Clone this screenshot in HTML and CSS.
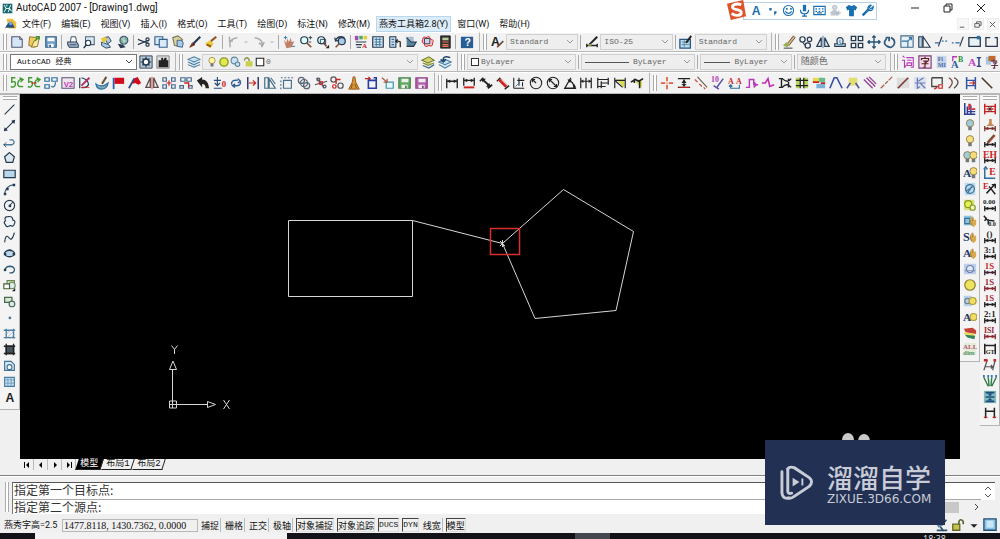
FILE: index.html
```html
<!DOCTYPE html>
<html lang="zh-CN">
<head>
<meta charset="utf-8">
<title>AutoCAD 2007 - [Drawing1.dwg]</title>
<link rel="stylesheet" href="styles.css">
</head>
<body>
<header class="titlebar">
  <svg class="app-logo" viewBox="0 0 16 16"><path fill="#15666d" d="M1 1h14v14H1z"/><path d="M3 3l3 5-3 5M6 8h4l3-5M9 13l2-5 3 4M7 2v3" stroke="#d7f0ee" stroke-width="1.5" fill="none"/></svg>
  <h1>AutoCAD 2007 - [Drawing1.dwg]</h1>
  <div class="window-buttons">
    <button aria-label="最小化"><svg viewBox="0 0 10 10"><path d="M1 5h8"/></svg></button>
    <button aria-label="还原"><svg viewBox="0 0 10 10"><path d="M1 3h6v6H1zM3 3V1h6v6H7"/></svg></button>
    <button aria-label="关闭"><svg viewBox="0 0 10 10"><path d="M1 1l8 8M9 1L1 9"/></svg></button>
  </div>
</header>
<nav class="menubar">
  <svg class="doc-logo" viewBox="0 0 16 16"><path fill="#f2bd34" d="M2 1h8l5 5v8H5z"/><path fill="#234f87" d="M0 13l4-6 5-2 4 8z"/><path fill="#79aeda" d="M5 3l6 5-5 2z"/></svg>
  <button>文件(F)</button><button>编辑(E)</button><button>视图(V)</button><button>插入(I)</button><button>格式(O)</button><button>工具(T)</button><button>绘图(D)</button><button>标注(N)</button><button>修改(M)</button><button class="hot">燕秀工具箱2.8(Y)</button><button>窗口(W)</button><button>帮助(H)</button>
  <div class="mdi-buttons">
    <button aria-label="最小化图形"><svg viewBox="0 0 10 10"><path d="M2 8h5"/></svg></button>
    <button aria-label="还原图形"><svg viewBox="0 0 10 10"><path d="M2 4h5v4H2zM4 4V2h5v4H7"/></svg></button>
    <button aria-label="关闭图形"><svg viewBox="0 0 10 10"><path d="M2 2l6 6M8 2L2 8"/></svg></button>
  </div>
</nav>

<div class="band band-standard">
  <div class="toolbar"><i class="grip"></i><div class="icons" data-icons="new open save | print preview publish web | cut copy paste brush match | undo dash redo dash | pan zoom zoomwin zoomprev | props center palette sheet markup calc | help"></div></div>
  <div class="toolbar">
    <i class="grip"></i>
    <div class="icons single" data-icons="textstyle"></div>
    <label class="combo"><select aria-label="文字样式"><option>Standard</option></select></label>
    <i class="sep"></i>
    <div class="icons single" data-icons="dimstyle"></div>
    <label class="combo"><select aria-label="标注样式"><option>ISO-25</option></select></label>
    <i class="sep"></i>
    <div class="icons single" data-icons="tablestyle"></div>
    <label class="combo"><select aria-label="表格样式"><option>Standard</option></select></label>
  </div>
  <div class="toolbar flush"><i class="grip"></i><div class="icons" data-icons="erase copyobj mirror offset array move rotate scale stretch trim extend breakpt break"></div></div>
</div>

<div class="band band-layers">
  <div class="toolbar">
    <i class="grip"></i>
    <label class="combo active"><select aria-label="工作空间"><option>AutoCAD 经典</option></select></label>
    <div class="icons pair" data-icons="gear workspace"></div>
  </div>
  <div class="toolbar">
    <i class="grip"></i>
    <div class="icons single" data-icons="layers"></div>
    <label class="combo layer-combo"><span class="layer-state" data-icons="bulb sun freeze lock swatch"></span><select aria-label="图层"><option>0</option></select></label>
    <div class="icons pair" data-icons="layercur layerprev"></div>
  </div>
  <div class="toolbar properties">
    <i class="grip"></i>
    <label class="combo"><span class="swatch"></span><select aria-label="颜色"><option>ByLayer</option></select></label>
    <i class="sep"></i>
    <label class="combo"><span class="stroke"></span><select aria-label="线型"><option>ByLayer</option></select></label>
    <i class="sep"></i>
    <label class="combo"><span class="stroke short"></span><select aria-label="线宽"><option>ByLayer</option></select></label>
    <i class="sep"></i>
    <label class="combo"><select aria-label="打印样式"><option>随颜色</option></select></label>
  </div>
  <div class="toolbar flush"><i class="grip"></i><div class="icons" data-icons="ci zi fimi ab ai colorzi"></div></div>
</div>

<div class="band band-tools">
  <div class="toolbar"><i class="grip"></i><div class="icons" data-icons="swap swapx blocks v2 pencil dish flag flagpen triangles squares squares2 turn level spin wall copyangle copydash chain cluster linkred broom insert pastebox disk diskpink"></div></div>
  <div class="toolbar"><i class="grip"></i><div class="icons" data-icons="dlin dred dalign dpencil dord radius diameter dangle dbase dcont dyellow dbird"></div></div>
  <div class="toolbar flush"><i class="grip"></i><div class="icons" data-icons="crossred inter dashred ten aa step zigzag beam hatchy colors vblue vyellow diag dashd diagred chang corner arcs hblue slant"></div></div>
</div>

<main class="workspace">
  <aside class="side"><i class="grip"></i><div class="icons vertical draw" data-icons="line xline pline polygon rect arc circle cloud spline ellipse earc insblock mkblock point hatch gradient region table mtext"></div></aside>
  <section class="drawing">
    <svg class="canvas" viewBox="20 94 940 365" preserveAspectRatio="xMinYMin slice" role="img" aria-label="模型空间">
      <g fill="none" stroke="#d6d6d6" stroke-width="1">
        <path d="M288.500 220.500H412.500V296.500H288.500Z"/>
        <path d="M412.500 220.500L502.500 243.500L563.500 189.500L633.500 231.500L616 310.500L535 318.500L502.500 243.500"/>
        <path d="M500 241l5 5M505 241l-5 5M502.500 240v7"/>
        <path d="M172.500 408V369M169 404.500H207M169.500 401h7v7h-7zM169.500 369.500h7l-3.500-8.500zM207.500 401.500v6l8-3z"/>
        <path d="M171.500 345.500l3 4 3-4M174.500 349v5M223.500 400l6 9M229.500 400l-6 9"/>
      </g>
      <path d="M490.500 228.500h29v26h-29z" fill="none" stroke="#d4312e" stroke-width="1.5"/>
      <g fill="#c9c9cc"><ellipse cx="848" cy="440" rx="6" ry="7"/><ellipse cx="864" cy="441" rx="6" ry="7"/></g>
    </svg>
    <div class="tabs">
      <button class="nav" aria-label="第一个"><svg viewBox="0 0 8 8"><path d="M1 1h1v6H1zM6 1v6L3 4z"/></svg></button>
      <button class="nav" aria-label="上一个"><svg viewBox="0 0 8 8"><path d="M5 1v6L2 4z"/></svg></button>
      <button class="nav" aria-label="下一个"><svg viewBox="0 0 8 8"><path d="M3 1v6l3-3z"/></svg></button>
      <button class="nav" aria-label="最后一个"><svg viewBox="0 0 8 8"><path d="M6 1h1v6H6zM2 1v6l3-3z"/></svg></button>
      <button class="tab current"><span>模型</span></button><button class="tab"><span>布局1</span></button><button class="tab"><span>布局2</span></button>
    </div>
  </section>
  <aside class="side"><i class="grip"></i><div class="icons vertical" data-icons="layred lamp bulbon bulbs abulb ring greenlay bluehand shand ahand freezelay disc discs adisc stack alldim"></div></aside>
  <aside class="side"><i class="grip"></i><div class="icons vertical" data-icons="r1 r2 r3 eh le ex zero cart paren r31 is1 is2 is3 r21 isr gt rarr comb bluedim hdim"></div></aside>
</main>

<section class="command">
  <i class="grip"></i>
  <div class="command-body">
    <p class="history">指定第一个目标点:</p>
    <div class="prompt-row">
      <input class="prompt" aria-label="命令行" value="指定第二个源点:">
      <div class="hscroll"><span class="thumb"></span><button aria-label="向右滚动"><svg viewBox="0 0 8 8"><path d="M2 1l3 3-3 3"/></svg></button></div>
    </div>
    <div class="vscroll"><svg viewBox="0 0 8 14"><path d="M1 5l3-3 3 3M1 9l3 3 3-3"/></svg></div>
  </div>
</section>

<footer class="statusbar">
  <span class="height-label">燕秀字高=2.5</span>
  <output class="coords">1477.8118, 1430.7362, 0.0000</output>
  <div class="modes">
    <button>捕捉</button><button>栅格</button><button>正交</button><button>极轴</button><button class="on">对象捕捉</button><button class="on">对象追踪</button><button class="on latin">DUCS</button><button class="on latin">DYN</button><button>线宽</button><button class="on">模型</button>
  </div>
  <div class="tray" data-icons="satellite padlock caret screen"></div>
</footer>
<div class="taskbar"><span class="search"></span><span class="running"></span><time>18:38</time></div>

<div class="ime">
  <svg class="ime-logo" viewBox="0 0 22 22"><path fill="#df5329" d="M1 4L18 0l3 17L5 21z"/><path d="M16 5c-5-2-10 0-9 3s9 1 9 5-7 4-10 1" fill="none" stroke="#fff" stroke-width="3"/></svg>
  <div class="ime-tools" data-icons="imea punct smile mic keyboard person shirt wrench"></div>
</div>

<div class="watermark">
  <svg viewBox="0 0 36 36"><g fill="none" stroke="#c9ccd6" stroke-width="3" stroke-linecap="round"><path d="M2 7v22q1 6 7 5"/><path d="M8 4v23q0 3 4 2"/><path d="M8 4q2-3 7-1l15 10q5 4 0 9L15 32q-4 3-6 2"/></g><path fill="#c9ccd6" d="M13 13v9l7-4.500zM22 14h2v7h-2z"/></svg>
  <div><strong>溜溜自学</strong><span>ZIXUE.3D66.COM</span></div>
</div>
<script src="icons.js"></script>
</body>
</html>
```

FILE: styles.css
```css
* { box-sizing: border-box; }
body {
  margin: 0;
  height: 100vh;
  display: flex;
  flex-direction: column;
  overflow: hidden;
  background: #f0f0f0;
  color: #111;
  font: 9px/12px "Noto Sans", "Noto Sans CJK SC", sans-serif;
}
button, select, input { font: inherit; color: inherit; border: 0; padding: 0; margin: 0; background: none; }
svg { display: block; }
i { display: block; }

.titlebar, .menubar { display: flex; align-items: center; background: #fff; height: 16px; flex: none; }
.app-logo { width: 11px; height: 11px; margin: 0 3px 0 2px; }
h1 { margin: 0; font: 10px/14px Roboto, "Noto Sans", sans-serif; }
.window-buttons { margin-left: auto; display: flex; gap: 23px; padding-right: 14px; }
.window-buttons svg { width: 10px; height: 10px; fill: none; stroke: #222; }

.doc-logo { width: 12px; height: 12px; margin: 0 -1px 0 5px; }
.menubar { gap: 2px; }
.menubar > button { padding: 0 4px; height: 16px; line-height: 14px; white-space: nowrap; font-family: Roboto, "Noto Sans CJK SC", sans-serif; }
.menubar .hot { background: #dcecf8; border: 1px solid #b7d7ee; line-height: 12px; padding: 0 2px; }
.mdi-buttons { margin-left: auto; display: flex; gap: 3px; padding-right: 1px; }
.mdi-buttons button { width: 12px; height: 12px; background: #f7f7f7; border: 1px solid #eee; }
.mdi-buttons svg { width: 9px; height: 9px; fill: none; stroke: #555; }

.band { display: grid; height: 20px; flex: none; }
.band-standard { grid-template-columns: 480fr 292fr 228fr; }
.band-layers { grid-template-columns: 176fr 282fr 433fr 109fr; }
.band-tools { grid-template-columns: 435fr 215fr 350fr; height: 22px; }
.toolbar {
  display: flex;
  align-items: center;
  min-width: 0;
  overflow: hidden;
  padding: 0 4px 0 3px;
  border-right: 1px solid #b5b5b5;
  border-bottom: 1px solid #b9b9b9;
  border-top: 1px solid #fff;
  background: #f2f2f2;
}
.toolbar.flush { padding-right: 0; border-right: 0; }
.band-tools .flush { padding-right: 4px; }
.grip { flex: none; width: 4px; height: 16px; margin-right: 2px; border: solid #aaa; border-width: 0 1px; background: #fff; }
.sep { flex: none; width: 1px; height: 14px; margin: 0 2px; background: #aaa; }
.icons { flex: 1; display: flex; align-items: center; min-width: 0; }
.icons.single { flex: none; width: 17px; }
.icons.pair { flex: none; width: 34px; }
.tool { flex: 1 1 0; min-width: 0; display: flex; justify-content: center; align-items: center; }
.tool svg { width: 14px; height: 14px; flex: none; }
.tool.dash { flex: 0 0 9px; }
.tool.dash svg { width: 8px; }

.combo {
  flex: 1 1 0;
  min-width: 0;
  height: 16px;
  display: flex;
  align-items: center;
  padding: 0 3px;
  border: 1px solid #d0d0d0;
  background: #eee;
  color: #666;
  font: 8px/12px "Liberation Mono", "Noto Sans CJK SC", monospace;
}
.combo select { flex: 1; min-width: 0; height: 14px; appearance: none; outline: 0; }
.combo > svg { width: 8px; height: 8px; flex: none; fill: none; stroke: #999; }
.combo.active { background: #fff; border-color: #777; color: #111; padding-left: 6px; margin-left: 1px; }
.combo.active > svg { stroke: #444; }
.layer-combo { margin-right: 1px; }
.layer-state { display: flex; width: 60px; flex: none; }
.layer-state .tool svg { width: 12px; height: 12px; }
.swatch { width: 8px; height: 8px; margin-right: 2px; border: 1px solid #333; background: #fff; }
.stroke { flex: none; width: 44px; height: 1px; margin-right: 4px; background: #555; }
.stroke.short { width: 26px; }
.properties .combo:nth-of-type(2) { flex-grow: 114; }
.properties .combo:nth-of-type(1) { flex-grow: 108; }
.properties .combo:nth-of-type(3) { flex-grow: 89; }
.properties .combo:nth-of-type(4) { flex-grow: 87; }
.properties .combo:last-child { font-size: 9px; }

.workspace { flex: 1; min-height: 0; display: flex; align-items: flex-start; }
.side {
  flex: none;
  width: 20px;
  padding: 1px 1px 4px;
  border: solid #b5b5b5;
  border-width: 1px 1px 1px 0;
  background: #f4f4f4;
}
.side .grip { width: 14px; height: 4px; margin: 0 2px 1px; border-width: 1px 0; }
.vertical { flex-direction: column; align-items: stretch; }
.vertical .tool { flex: none; height: 16px; }
.draw .tool svg { width: 13px; height: 13px; }
.drawing { flex: 1; min-width: 0; align-self: stretch; display: flex; flex-direction: column; }
.canvas { flex: 1; min-height: 0; width: 100%; background: #000; }
.tabs { display: flex; height: 11px; flex: none; font: 9px/11px "Liberation Mono", "Noto Sans CJK SC", monospace; }
.nav { width: 14px; height: 11px; border-right: 1px solid #bbb; display: flex; justify-content: center; align-items: center; }
.nav svg { width: 8px; height: 8px; }
.tab { height: 11px; padding: 0 3px; margin-left: 1px; border-right: 1px solid #222; border-bottom: 1px solid #222; transform: skewX(-18deg); }
.tab span { display: block; line-height: 10px; transform: skewX(18deg); }
.tab.current { background: #000; color: #fff; }

.command { flex: none; display: flex; margin-top: 5px; padding: 6px 5px 1px 5px; border-top: 1px solid #808080; box-shadow: inset 0 1px #fff; }
.command .grip { width: 4px; height: 30px; margin-right: 3px; }
.command-body {
  flex: 1;
  display: grid;
  grid-template-columns: 1fr 14px;
  background: #fff;
  border-left: 1px solid #777;
  border-top: 1px solid #555;
  font: 12px/16px "Noto Sans CJK SC", sans-serif;
  color: #333;
}
.history { margin: 0; line-height: 14px; height: 17px; padding-left: 1px; border-bottom: 1px solid #aaa; }
.prompt-row { grid-column: 1 / 3; display: flex; height: 14px; }
.prompt { flex: 4; min-width: 0; height: 14px; line-height: 14px; padding-left: 1px; }
.vscroll { grid-column: 2; grid-row: 1; display: flex; align-items: center; justify-content: center; }
.vscroll svg { width: 8px; height: 14px; fill: none; stroke: #555; }
.hscroll { flex: 1; display: flex; align-items: center; justify-content: flex-end; background: #f0f0f0; }
.thumb { flex: 1; height: 11px; background: #c8c8c8; }
.hscroll button { width: 36px; display: flex; justify-content: center; }
.hscroll svg { width: 8px; height: 8px; fill: none; stroke: #444; }

.statusbar { flex: none; height: 18px; display: flex; align-items: center; padding: 2px 2px 0 4px; white-space: nowrap; }
.height-label { width: 58px; font-family: Roboto, "Noto Sans CJK SC", sans-serif; }
.coords { width: 136px; height: 13px; padding-left: 1px; border: 1px solid #b8b8b8; font: 10px/11px "Liberation Serif", serif; }
.modes { display: flex; gap: 3px; margin-left: 2px; }
.modes button { height: 14px; line-height: 13px; border-right: 1px solid #bbb; padding: 0 1px; }
.modes .on { border: 1px solid #444; border-right-color: #ddd; border-bottom-color: #ddd; padding: 0; }
.modes .latin { font: 8px/12px "Liberation Mono", monospace; }
.tray { margin-left: auto; display: flex; width: 64px; }
.taskbar { flex: none; height: 6px; display: flex; background: #111318; overflow: hidden; padding-left: 35px; color: #ddd; }
.search { width: 252px; background: #f2f2f2; }
.running { width: 35px; margin-left: 288px; background: #44474d; }
.taskbar time { margin-left: auto; margin-right: 54px; line-height: 12px; font-size: 9px; }

.ime { position: absolute; top: 0; right: 123px; display: flex; align-items: center; }
.ime-logo { width: 21px; height: 21px; z-index: 1; margin-right: -4px; }
.ime-tools { display: flex; width: 134px; height: 18px; padding: 0 1px 0 5px; border: 1px solid #b9d0e8; background: #fff; }
.ime-tools .tool svg { width: 13px; height: 13px; }

.watermark { position: absolute; right: 55px; bottom: 14px; width: 180px; height: 85px; display: flex; align-items: center; gap: 12px; padding-left: 15px; background: #213053; color: #c9ccd6; }
.watermark svg { width: 35px; height: 35px; flex: none; }
.watermark strong { display: block; font: 500 26px/32px "Noto Sans CJK SC", sans-serif; }
.watermark span { display: block; font: 12px/12px "DejaVu Sans", sans-serif; }
```

FILE: icons.js
```js
const N = '#26394f', B = '#2f6f9f', L = '#a9cbe8', R = '#c22', G = '#3f9a2f', K = '#222', Y = '#e8c93a', M = '#b93bb9';
const s = (c, d, w = 1.4, f = 'none') => `<path d="${d}" stroke="${c}" stroke-width="${w}" fill="${f}"/>`;
const f = (c, d) => `<path d="${d}" fill="${c}"/>`;
const o = (c, x, y, r, fill = 'none', w = 1.4) => `<circle cx="${x}" cy="${y}" r="${r}" stroke="${c}" stroke-width="${w}" fill="${fill}"/>`;
const t = (c, str, x, y, z, fam = 'Liberation Serif') => `<text x="${x}" y="${y}" font-size="${z}" font-family="${fam}" font-weight="bold" fill="${c}">${str}</text>`;
const dim = (c = K) => s(c, 'M2 9v6M14 9v6M2 12h12', 1.5) + f(c, 'M2 12l4-2v4zM14 12l-4-2v4z');
const bulb = (x, c = Y) => o('#967c38', x, 6, 4.2, c, 1) + f('#777', `M${x - 2} 10h4v4h-4z`);
const hand = f('#d8a951', 'M8 6l2-3 1 4 1-4 1 4 2-1v6l-3 3-4-4z') + s('#8b6829', 'M8 7l2 6M11 3v5', 0.8);

const icons = {
  new: s('#557', 'M2 2h9l3 3v9H2z', 1.2, '#d4e7f6') + s('#557', 'M11 2v3h3', 1),
  open: s('#8a6d22', 'M3 2l8 1-2 11-7-2z', 1, '#edcb62') + s('#8a6d22', 'M5 14l3-7 6-4-2 10z', 1, '#f8e9a5') + s(G, 'M9 7l4-4M10 2h4v3', 1.5),
  save: s('#335d86', 'M2 2h12v12H2z', 1.3, '#6f9fc6') + f('#fff', 'M4 3h8v4H4zM5 10h6v4H5z') + f('#335d86', 'M6 11h2v3H6z'),
  print: s(N, 'M5 8l1-6h5l1 6', 1, '#fff') + s(N, 'M2 8h10l2 3v3H4l-2-3z', 1.2, L) + f('#667', 'M4 10h8v2H4z'),
  preview: s('#567', 'M4 2h10v9H4z', 1.2, '#d8e9f6') + o(N, 7, 9, 3, '#fff', 1.3) + s(N, 'M5 11l-3 4', 1.8),
  publish: s(N, 'M6 3l5-1 3 5-4 3zM3 8l8 3 2 3-5 1-5-3z', 1, L) + f(Y, 'M2 4l5-2 3 3-5 4z'),
  web: o('#457', 9, 6, 4.5, '#76b79c') + s('#ddd', 'M6 4q3 4 6 3M9 2v8', 1) + f(N, 'M2 10l6 1 3 3-6 1z'),
  cut: s(N, 'M1 5l13 5M1 11l12-5', 1.3) + o(N, 12, 5, 1.8) + o(N, 12, 11, 1.8),
  copy: s('#35618b', 'M1 2h9v9H1z', 1.3, '#d9ebfa') + s('#35618b', 'M6 5h9v9H6z', 1.3, '#d9ebfa'),
  paste: s('#747c60', 'M2 3l6-2 5 4-2 8-7-1z', 1.3, '#ddd29b') + s('#357', 'M7 6h5l2 3-1 5-6-1z', 1, L),
  brush: s('#7b3428', 'M2 14l3-5 3 2z', 1, '#702b25') + s(N, 'M6 10l8-8', 2.4),
  match: f(Y, 'M1 10l6-4 4 4-4 5z') + s('#93531f', 'M3 11l5 2M8 7l6-5', 2.3),
  undo: s('#aaa', 'M5 14Q2 5 13 3M8 7H4V2', 1.7),
  redo: s('#aaa', 'M11 14Q14 5 3 3M8 9l4 3 2-4', 1.7),
  dash: s('#999', 'M5 8h6', 1.5),
  pan: f('#c18067', 'M2 5l3 4 1-5 2 4 2-5 1 5 3-1-3 7-6 1z') + s(B, 'M2 3h4M4 1v4M11 13h4', 1),
  zoom: o(N, 6, 6, 4, '#dff') + s('#885838', 'M9 9l5 5', 2) + s(N, 'M11 3h4M13 1v4M11 8h3', 1),
  zoomwin: o(N, 6, 6, 4, '#dff') + s('#885838', 'M9 9l3 4', 2) + s(N, 'M5 5h6v5H5z', 1) + f(K, 'M11 15h4v-4z'),
  zoomprev: o(N, 10, 7, 4, L) + s('#885838', 'M7 10l-4 4', 2) + s(N, 'M13 3Q6 0 3 6M2 3l1 4 4-1'),
  props: f('#a34cad', 'M1 1h4v5H1z') + f('#48b064', 'M6 1h4v4H6z') + f(Y, 'M11 1h4v4h-4z') + s(N, 'M2 8h12M2 11h7M3 14h5') + t(R, 'A', 9, 15, 8),
  center: s(N, 'M2 2h12v12H2z', 1.4, '#d8e8ed') + s(B, 'M4 5h8M4 8h8M4 11h8M6 3v10M10 3v10', 1),
  palette: s(N, 'M2 2h7v12H2z', 1.2, '#cde') + s(B, 'M4 5h3M4 8h3M4 11h3') + s(K, 'M9 6l5 2v6M11 5l-2 2 2 2'),
  sheet: f('#a8bed0', 'M2 2h9v9l-6-1z') + s(N, 'M3 3l5 5h6l-3 5H3', 1.2, '#58849d'),
  markup: s(R, 'M2 5q0-4 4-2 4-3 5 2 5 1 2 4 1 5-4 3-5 3-5-2-4-1-2-5z', 1.1, '#f5c4c4') + s(N, 'M4 4h6v6H4z', 1, '#dce'),
  calc: s(K, 'M3 1h11v14H3z', 1, '#372f2d') + f('#b8cd9e', 'M5 3h7v3H5z') + s('#e3765b', 'M5 8h7M5 11h7M5 13h7', 1.3),
  help: f('#285e94', 'M1 2h14v13H1z') + t('#fff', '?', 5, 13, 12, 'Liberation Sans'),
  textstyle: t(K, 'A', 0, 12, 14, 'Liberation Sans') + s('#7b4634', 'M7 14l7-7', 2),
  dimstyle: s(K, 'M2 12h12M2 10v4M14 10v4', 1.5) + s(K, 'M5 11L14 2', 2.3) + f('#995', 'M3 12l5-3-1 4z'),
  tablestyle: s('#255787', 'M1 5h12v10H1z', 1.5, '#c0dff3') + s('#55839f', 'M3 8h9M3 11h9M6 6v8', 1) + s(K, 'M8 9l6-8', 2.2),
  erase: s('#5e4a34', 'M6 10l7-9 2 2-7 9z', 1, '#d9b27b') + f('#9cae54', 'M1 12l4-4 4 3-3 3z') + s(K, 'M2 15h10', 1),
  copyobj: o(N, 4, 5, 3) + o(N, 12, 5, 2.5) + o(N, 10, 12, 3) + s(N, 'M4 8l3 4', 1.3),
  mirror: s(N, 'M6 3v10H1zM10 3v10h5z', 1.3) + s(B, 'M8 1v14', 1),
  offset: s(N, 'M2 13h12v-3h-3q2-7-3-7-5 0-3 7H2z', 1.3, '#d8e8f0') + s(B, 'M5 11h6q-4-1-3-5', 1),
  array: s(N, 'M1.500 1.500h5v5h-5zM9.500 1.500h5v5h-5zM1.500 9.500h5v5h-5zM9.500 9.500h5v5h-5z', 1.5),
  move: s('#245076', 'M8 1v14M1 8h14M6 3l2-2 2 2M6 13l2 2 2-2M3 6L1 8l2 2M13 6l2 2-2 2', 1.5),
  rotate: s('#315b80', 'M4 4q-5 6 1 9 6 3 8-3 1-5-4-7M3 3h4v4', 2),
  scale: s('#486c88', 'M1 1h14v13H1z', 1.3, '#e6f1f7') + s(B, 'M2 7h7v7M9 7l4-4M10 3h3v3', 1.3),
  stretch: s(N, 'M2 2h4v12H2z', 1.2, '#b4d1e4') + s(N, 'M7 2v12h8z', 1.2),
  trim: s(B, 'M1 9h5M9 7h2M13 7h2', 1.3) + s(N, 'M5 13L9 2', 1.3),
  extend: s(B, 'M1 9h2M5 9h5', 1.3) + s(N, 'M10 13l4-11', 1.3),
  breakpt: s(N, 'M1 3h13v10H1z', 1.5, '#e8f1f7') + f(B, 'M10 1h4v4h-4z'),
  break: s(N, 'M6 3H1v10h13V3h-3', 1.5),
  gear: s(N, 'M1 1h14v14H1z', 1, '#b7cad6') + o(N, 8, 8, 3.5, '#fff', 1.8) + s(N, 'M8 2v3M8 11v3M2 8h3M11 8h3M4 4l2 2M10 10l2 2M12 4l-2 2M6 10l-2 2', 1.4),
  workspace: s('#777', 'M1 1h14v14H1z', 1, '#ddd') + f(K, 'M3 6h3V3h2v3l2-3h2v3h2v8H3z'),
  layers: s('#49799a', 'M1 5l7-3 7 3-7 3zM1 8l7 3 7-3M1 11l7 3 7-3', 1.2, '#c8e2f1'),
  bulb: bulb(8, '#fff6a2'),
  sun: o('#899621', 8, 8, 5.5, '#e3e94c', 1.8),
  freeze: o('#5a849f', 6, 6, 4.5, '#cde0eb') + o('#5a849f', 10, 11, 3, '#cde0eb'),
  lock: s('#83913d', 'M3 6q2-6 6-2l1 3', 1.8) + f('#c6d14e', 'M5 7h9v7H5z'),
  swatch: s(K, 'M3 3h10v10H3z', 1.4, '#fff'),
  layercur: s('#708230', 'M1 6l8-4 6 4-7 3zM2 9l6 3 7-3', 1.2, '#d6d46d') + s('#3e6987', 'M2 12l7 3 6-4', 1.4),
  layerprev: s('#49799a', 'M1 8l7-3 7 3-7 3zM1 11l7 4 7-4', 1.2, '#c8e2f1') + s('#1f476a', 'M14 3Q5 0 6 7M3 5l3 3 3-3', 1.7),
  ci: s(M, 'M2 1l2 2M1 6h3v8l2-2M6 3h8v11h-3M7 6h5M7 9h5v3H7z', 1.3),
  zi: s('#784078', 'M1 1h14v14H1z', 1.3, '#f4d9e8') + s('#522', 'M4 6V4h8v2M8 2v2M6 7h5l-3 2v5H6M4 10h8', 1.4),
  fimi: f('#c5d4eb', 'M2 1h11v14H2z') + t('#5269a0', 'Fi', 3, 7, 7) + t('#5269a0', 'MI', 3, 14, 7),
  ab: t('#315fa0', 'A', 0, 15, 12) + t('#25973b', 'B', 8, 8, 9) + s(M, 'M2 7V2h5', 1.5),
  ai: t('#c149c1', 'A', 0, 13, 13) + s('#2c4186', 'M10 3h5M10 13h5M12.500 3v10', 1.7),
  colorzi: f('#a9c6dc', 'M1 2h6v9H1z') + f('#bf6a31', 'M4 1h8v6H4z') + s('#60324b', 'M7 7h7M10 5v2M9 9h4l-2 2v4H9M7 12h8', 1.3),
  swap: s(G, 'M6 2H2v5q5-2 4 3-1 4-5 2M15 4q-5-1-6 4-1 5 6 4M11 2l4 2-3 3', 1.6),
  swapx: s(G, 'M6 2H2v5q5-2 4 3-1 4-5 2M15 4q-5-1-6 4-1 5 6 4M11 2l4 2-3 3', 1.6) + s(R, 'M5 8h6', 1.2),
  blocks: s(B, 'M1 2h5v4H1zM9 2h6v4H9zM1 10h5v4H1zM8 12q5 2 5-5', 1.4),
  v2: s('#557', 'M1 2h14v12H1z', 1.2, '#f0e4ef') + t(M, 'V2', 3, 12, 9, 'Liberation Sans'),
  pencil: s(N, 'M2 2v12M4 2q8 2 8 8-2 4-8 3', 1.4) + s('#a36', 'M4 11l9-9', 2.2) + s(R, 'M4 13h9', 1),
  dish: s(B, 'M1 9q7 5 14-1-1 7-8 7-5 0-6-6z', 1.3, '#7dacb4') + s('#6a5433', 'M8 9l5-8', 2.2),
  flag: s('#275dae', 'M3 2v13', 2) + f('#d40b1a', 'M4 2h11v7H4z'),
  flagpen: f('#d40b1a', 'M6 3l5-2 4 7-3 2-4-2-3 1z') + s('#314785', 'M1 14l6-11', 2),
  triangles: s('#5e4c4c', 'M6 2v11H1zM10 2v11h5z', 1.5) + s(R, 'M8 1v14', 1),
  squares: s('#456b8d', 'M1 2h4v4H1zM11 2h4v4h-4zM1 10h4v4H1zM11 10h4v4h-4z', 1.4) + s(R, 'M5 8h6M8 5v6', 1.4),
  squares2: s('#456b8d', 'M2 2h5v4H2zM9 2h5v4H9zM1 11h4v3H1zM11 11h4v3h-4z', 1.4) + s(R, 'M6 8h5v5', 1.5),
  turn: f(K, 'M1 5l6-4v3q7 0 8 10h-4q0-5-4-5v4z'),
  level: s('#274b77', 'M1 5h8M5 1v9M2 8l3 3 3-3M1 14h9', 1.3) + t(R, '0', 10, 13, 10),
  spin: s('#315f96', 'M3 10Q2 4 10 5M10 3l3 3-3 2M13 7q1 5-7 4M7 9l-3 2 3 2', 1.6),
  wall: s('#2c3d6e', 'M2 1v14M14 1v14', 1.7) + s(R, 'M3 8h8M8 5l3 3-3 3', 1.4),
  copyangle: s('#476f88', 'M2 2h4v12H2zM7 3l7 11H7z', 1.4) + s('#476f88', 'M9 2l5 7', 1.2),
  copydash: s('#476f88', 'M4 5h9v9H4z', 1.3) + s('#476f88', 'M1 2h2M5 2h2M9 2h2M13 2h2M1 5v2M1 9v2M1 13v2', 1.3),
  chain: o('#566475', 5, 5, 3.5) + o('#566475', 11, 11, 3.5) + o('#566475', 8, 8, 4),
  cluster: s('#50515c', 'M3 2l9 12M1 10l14-4', 1.2) + o('#50515c', 5, 4, 1.7) + o('#50515c', 12, 12, 1.7) + o(R, 8, 8, 2),
  linkred: o('#555', 4, 4, 3) + o('#555', 12, 11, 3) + s(R, 'M12 4H7v5', 1.5) + o(R, 5, 12, 2),
  broom: s('#8f501c', 'M7 1h2l1 6 4 8H2l4-8z', 1, '#d9982f') + s('#774617', 'M6 9l-1 5M9 9l2 5', 1),
  insert: s(R, 'M1 3h6M5 1l2 2-2 2', 1.5) + s('#263ba1', 'M5 5h9v9H5zM11 2h3v4', 1.8),
  pastebox: s('#4a91ac', 'M6 7h8v7H6z', 1.4, '#e2fcff') + s('#a85c44', 'M1 2l6 5M3 7h4V3', 1.4),
  disk: s('#4b804c', 'M1 2h13v12H1z', 1.4, '#5fac62') + f('#eee', 'M4 3h8v4H4zM4 10h7v4H4z') + f('#4b804c', 'M8 11h2v3H8z'),
  diskpink: s('#884884', 'M1 2h13v12H1z', 1.4, '#b660af') + f('#eee', 'M4 3h8v4H4zM4 10h7v4H4z') + f('#884884', 'M8 11h2v3H8z'),
  dlin: s(K, 'M2 3v11M14 3v11M2 6h12', 1.5) + f(K, 'M2 6l4-2v4zM14 6l-4-2v4z'),
  dred: s(K, 'M2 2v9M14 2v9M2 5h12', 1.5) + f(K, 'M2 5l4-2v4zM14 5l-4-2v4z') + s(R, 'M2 13h12', 2.2),
  dalign: s(K, 'M1 6l4-4M10 14l5-4M4 4l9 8', 2) + f(K, 'M3 3h5l-4 4zM13 13l-5-1 4-4z'),
  dpencil: s(K, 'M1 6l4-4M10 15l5-4', 1.5) + s(R, 'M4 4l8 8', 4) + s('#fff', 'M6 4l7 7', 1),
  dord: s(K, 'M2 2v12M2 14h12M6 5h8M8 2v9M12 7v5', 1.2) + s(B, 'M4 12l5-5', 1),
  radius: o(K, 8, 8, 6.5, '#eee', 1.2) + s(K, 'M8 8L4 4M4 7V4h3', 1.3),
  diameter: o(K, 8, 8, 6.5, '#eee', 1.2) + s(K, 'M4 4l8 8M4 7V4h3M12 9v3H9', 1.3),
  dangle: s(K, 'M15 14H2l7-12M6 5q6 1 7 9', 1.5) + f(K, 'M5 4l5 0-2 4zM11 13h4l-2-4z'),
  dbase: s(K, 'M2 2v12M8 2v12M14 2v12M2 6h12', 1.4) + f(K, 'M2 6l3-2v4zM14 6l-3-2v4z'),
  dcont: s(K, 'M2 2v12M2 4h12M6 8h8M14 2v8M6 6v8M2 12h9', 1.4),
  dyellow: f('#d8dc51', 'M4 4l9 10V4z') + s(K, 'M2 2v12M14 2v12M2 5h12M3 6l8 7', 1.3),
  dbird: f('#d8dc51', 'M6 6l7 8 1-8z') + s(K, 'M1 7l5-3 4 2 5-3M5 3v5M11 6v8', 1.8),
  crossred: s('#d96346', 'M8 1v5M8 10v5M1 8h5M10 8h5', 2) + s('#d96346', 'M7 8h2', 1),
  inter: s(K, 'M1 3h14M1 13h14', 1.7) + s(R, 'M2 13h12', 1.2) + s(K, 'M8 4v8', 1.5) + f(K, 'M5 8h6l-3-4zM5 9h6l-3 3z'),
  dashred: s('#c9513f', 'M1 4l3 3M6 9l3 3M11 13l2 2', 1.5) + s('#705d4d', 'M4 1l11 12', 1.3),
  ten: t(M, '10', 0, 7, 9) + s('#5753a8', 'M6 14L14 3M3 11l6 4', 1.7),
  aa: t(R, 'A', 0, 9, 9) + t(R, 'A', 9, 9, 9) + s(B, 'M3 10v4h10v-4M1 12l2-2 2 2', 1.3),
  step: s(M, 'M1 13h4V4h5v6h5M10 7l3 3-3 3', 1.7),
  zigzag: s('#c92bb3', 'M1 8h4l3-5 2 9 5-2', 1.8),
  beam: s(K, 'M1 3h4q6 6 10 0M1 13h4q5-6 10 0M4 3v10M12 3v10', 1.6),
  hatchy: f('#b4d75a', 'M1 2h5v12H1zM10 2h5v12h-5z') + s(K, 'M1 5h14M1 11h14M6 2v12M10 2v12', 1.4),
  colors: f('#e9d950', 'M1 2h7v5H1z') + f('#6cbb8d', 'M8 2h7v5H8z') + f('#7db0d6', 'M5 9h10v5H5z') + s(R, 'M1 7h7M10 8h5', 2),
  vblue: s('#3a4da5', 'M1 14L6 2h3l6 12', 1.8),
  vyellow: f('#e1df73', 'M3 2h10v9H3z') + s('#4a56a1', 'M1 14l4-6M15 14l-4-6', 1.8),
  diag: s('#8d3f91', 'M1 4l10 10M4 2l10 10M7 1l8 8', 1.5),
  dashd: s('#a8634e', 'M2 14l4-4M7 9l3-3M11 5l4-4', 1.5),
  diagred: f('#ddd', 'M1 2h14v12H1z') + s('#7c3732', 'M2 14L14 2', 1.8),
  chang: f('#dde1f0', 'M1 1h14v14H1z') + s('#6a79b2', 'M5 2v12l3-2M2 8h12M12 2L6 6M8 8l6 6', 1.4),
  corner: s('#4b4742', 'M2 2h12v7M2 2v10h7', 1.5) + s(R, 'M10 10h4v4h-4zM8 13l-3 2', 1.4),
  arcs: s('#874b43', 'M2 2q8 4 0 12', 1.5) + s('#4f4b49', 'M8 2q9 4 0 12', 1.5),
  hblue: s('#2f55a6', 'M3 1v14M13 1v14M3 5h10M3 11h10', 1.7) + s(R, 'M6 8h6M10 6l2 2-2 2', 1.4),
  slant: s('#4e3b2e', 'M2 2l12 12', 1.9),
  line: s(N, 'M2 14L14 2', 1.3),
  xline: s(N, 'M2 14L14 2', 1.3) + f(N, 'M1 15l1-5 4 4zM15 1l-1 5-4-4z'),
  pline: s('#4a7894', 'M1 12h10q5-2 1-6H8', 1.6) + s(N, 'M4 9l-3 3 3 3', 1),
  polygon: s(N, 'M8 2l6 5-2 7H4L2 7z', 1.5, '#dce7ee'),
  rect: s(N, 'M1 4h14v9H1z', 1.5, '#b9d7ea'),
  arc: s('#355f7d', 'M2 14Q3 3 14 2', 1.5) + f(N, 'M1 12h3v3H1zM12 1h3v3h-3zM4 6h3v3H4z'),
  circle: o(N, 8, 8, 6.3) + s(N, 'M8 8l4-4', 1.3) + f(N, 'M7 7h3v3H7z'),
  cloud: s(N, 'M3 7Q1 2 6 2q6-1 6 4 4 1 2 5-1 4-5 2-5 3-6-1-3-3 0-5z', 1.4, '#edf3f7'),
  spline: s(N, 'M2 14Q3 3 7 8q4 6 7-6', 1.4),
  ellipse: '<ellipse cx="8" cy="8" rx="6" ry="4" fill="#bbd9ed" stroke="#26394f" stroke-width="1.6"/>' + f(N, 'M1 7h3v3H1zM12 7h3v3h-3zM7 3h3v2H7z'),
  earc: s('#315f7b', 'M3 8q0-4 6-4 6 1 5 5-1 4-6 3', 1.6) + f(N, 'M1 7h3v3H1z'),
  insblock: s('#678651', 'M5 2h9v9H5z', 1.4, '#d9e7c7') + o('#678651', 11, 8, 4, '#dcecf5') + s('#475f35', 'M1 6h7v6H1z', 1.4, '#fff') + f(K, 'M11 15h4v-4z'),
  mkblock: s('#476a4e', 'M2 3h9v6H2z', 1.5, '#d9e7d4') + o('#476a4e', 11, 11, 3.5, '#dce9f2'),
  point: f('#447795', 'M7 7h3v3H7z'),
  hatch: s('#497da1', 'M4 2v12M13 2v12M1 4h14M1 13h14', 1.6) + s('#76a4c1', 'M3 10l7-7M4 14L14 4M9 14l5-5', 0.8),
  gradient: s(K, 'M4 4h9v9H4z', 1.7, '#465461') + s(K, 'M4 1v14M13 1v14M1 4h14M1 13h14', 1.7),
  region: s('#437193', 'M2 3h8l4 4v7H2z', 1.4, '#d1e7f5') + o('#437193', 8, 10, 3, '#fff'),
  table: s('#477ba1', 'M2 3h12v11H2z', 1.4, '#c6e0f2') + s('#6696b8', 'M2 6h12M2 10h12M6 3v11M10 3v11', 1),
  mtext: t(K, 'A', 3, 14, 15, 'Liberation Sans'),
  layred: s('#2d3e8e', 'M2 1v13h12M5 5v9M9 4v10M5 11h9', 1.7) + f('#cb3342', 'M6 2h3v7H6zM10 7h4v2h-4z'),
  lamp: bulb(8, '#9dccdf'),
  bulbon: bulb(8, '#f5df84'),
  bulbs: bulb(5, '#9dccdf') + bulb(12, '#f2dc7c'),
  abulb: t('#22376a', 'A', 0, 13, 13) + bulb(12, '#f2dc7c'),
  ring: f('#b9d9ec', 'M2 1h12v14H2z') + o('#397197', 8, 8, 5) + s('#397197', 'M4 10l8-5M5 13l5-8', 1.2),
  greenlay: f('#d8e27b', 'M1 2h12v12H1z') + o('#849a25', 6, 7, 4, '#e4f254') + o('#849a25', 11, 11, 3, '#eef5ba'),
  bluehand: f('#8ac3dc', 'M1 2h9v11H1z') + s('#37739c', 'M2 5h6v6H2z') + hand,
  shand: t('#22376a', 'S', 0, 13, 14) + hand,
  ahand: t('#22376a', 'A', 0, 13, 13) + hand,
  freezelay: f('#bcd0e9', 'M1 2h14v12H1z') + o('#6d7fae', 8, 8, 4, '#deebf4') + s('#6d7fae', 'M2 10h12', 1),
  disc: o('#89813b', 8, 8, 6, '#f0e35c'),
  discs: f('#b8d2ec', 'M1 2h9v12H1z') + o('#6e8196', 5, 8, 3) + o('#ac9b35', 11, 8, 4, '#f0dd67'),
  adisc: t('#22376a', 'A', 0, 13, 13) + o('#ac9b35', 12, 8, 4, '#f0dd67'),
  stack: f('#c64137', 'M1 3l10-1 4 3v4L3 7z') + f('#e8d94d', 'M1 7l12 2v3L1 9z') + f('#36835a', 'M2 10l12 1-1 4-8-2z'),
  alldim: f('#e4edd6', 'M1 1h14v14H1z') + t('#b55978', 'ALL', 0, 8, 8) + t('#5b976b', 'dim', 0, 15, 8),
  r1: s(R, 'M2 2v12M14 2v12M2 5h12M2 11h12M4 8h8', 1.7) + s(K, 'M6 5l4 6M10 5l-4 6', 1),
  r2: dim('#7b352d') + f('#c88955', 'M7 1h3v5l3 3H4l3-3z'),
  r3: dim() + s('#6f5230', 'M5 10l8-9', 2.4) + s(R, 'M6 11l8-9', 1),
  eh: t(R, 'EH', 0, 9, 11) + dim(),
  le: s(B, 'M2 2v12h12M1 4l2-3 2 3', 1.7) + t(R, 'E', 7, 10, 11),
  ex: t(R, 'E', 0, 8, 10) + s(K, 'M4 13L14 2M7 5l7 9M10 3h4v4', 1.7),
  zero: t(K, '0.00', 0, 7, 8) + dim(),
  cart: s(K, 'M1 2l4 5 8 1M4 4l-2 4M6 6v6', 1.7) + t(K, '0.0', 6, 14, 7),
  paren: t(K, '()', 4, 8, 10) + dim(),
  r31: t(K, '3:1', 1, 8, 10) + dim(),
  is1: t(R, '1S', 2, 8, 10) + dim('#423'),
  is2: t('#9b2837', '1S', 2, 8, 10) + dim('#8a2832'),
  is3: t('#a72734', '1S', 2, 8, 10) + dim(),
  r21: t(K, '2:1', 1, 8, 10) + dim(),
  isr: t('#9b2731', 'ISI', 1, 8, 9) + dim('#8a2832'),
  gt: s(K, 'M2 2v12M14 2v12M2 4h12', 1.7) + t(K, 'GT', 3, 14, 7),
  rarr: s('#555', 'M1 14l4-12M11 14l3-12M3 10h8M9 8l2 2-2 2', 1.4) + f(R, 'M1 1h4v3H1zM12 1h3v3h-3z'),
  comb: s('#317c48', 'M1 4l5 10M6 4l1 10M10 4L9 14M15 4l-5 10', 1.6) + s('#3571a3', 'M1 1v3M6 1v3M10 1v3M15 1v3', 2),
  bluedim: f('#84b9bd', 'M1 1h14v14H1z') + s('#1c4f7e', 'M3 3h10M3 8h10M3 13h10', 1.8) + f('#1c4f7e', 'M5 4h6l-3 3zM5 12h6l-3-3z'),
  hdim: s(K, 'M3 2v12M13 2v12M3 6h10', 1.7) + s(R, 'M1 13h4M11 13h4', 1.5),
  satellite: f('#5e86a8', 'M1 6l6-5 4 6-7 4z') + s('#315777', 'M8 8l5-6M6 10l4 5M2 14h12', 2),
  padlock: s('#666b29', 'M2 7h8v7H2z', 1.5, '#c9c34b') + s('#555f28', 'M9 7V4q2-4 5 0v3', 1.8),
  caret: f(K, 'M4 7h8l-4 4z'),
  screen: s('#234f74', 'M1 1h14v13H1z', 1.5, '#8bc1e2') + f('#c8e7f8', 'M4 3h8v8H4z'),
  imea: t('#1970b0', 'A', 2, 14, 15, 'Liberation Sans'),
  punct: f(B, 'M4 5h3v3H4zM10 9h3v2l-3 3z'),
  smile: o('#1970b0', 8, 8, 6.2) + f('#1970b0', 'M5 5h2v2H5zM10 5h2v2h-2z') + s('#1970b0', 'M4 9q4 5 8 0'),
  mic: f('#1970b0', 'M6 1h4v8H6z') + s('#1970b0', 'M3 7q0 5 5 5t5-5M8 12v3M5 15h6', 1.5),
  keyboard: s('#1970b0', 'M1 3h14v10H1z') + s('#1970b0', 'M3 6h2M7 6h2M11 6h2M3 9h2M7 9h2M11 9h2M5 11h6', 1.4),
  person: o('#b9c2cc', 7, 4, 2.5, '#d7dde3') + f('#bdc6cf', 'M2 10q5-6 9 0v4H2z') + s('#9ba8b5', 'M9 11h6M12 8v6', 1),
  shirt: f('#1970b0', 'M1 4l4-3q3 3 6 0l4 3-2 4-2-1v8H5V7L3 8z'),
  wrench: s('#1970b0', 'M2 14l8-8', 3) + s('#1970b0', 'M13 1l-3 3 2 2 3-3q0 6-5 5-4-4 2-7', 1.5)
};

for (const host of document.querySelectorAll('[data-icons]')) {
  for (const name of host.dataset.icons.split(' ')) {
    if (name === '|') {
      host.insertAdjacentHTML('beforeend', '<i class="sep"></i>');
      continue;
    }
    const tag = host.closest('label') ? 'span' : 'button';
    const extra = name === 'dash' ? ' dash' : '';
    host.insertAdjacentHTML('beforeend', `<${tag} class="tool${extra}" aria-label="${name}"><svg viewBox="0 0 16 16">${icons[name]}</svg></${tag}>`);
  }
}
for (const combo of document.querySelectorAll('.combo')) {
  combo.insertAdjacentHTML('beforeend', '<svg viewBox="0 0 8 8"><path d="M1 2l3 3 3-3"/></svg>');
}
```
